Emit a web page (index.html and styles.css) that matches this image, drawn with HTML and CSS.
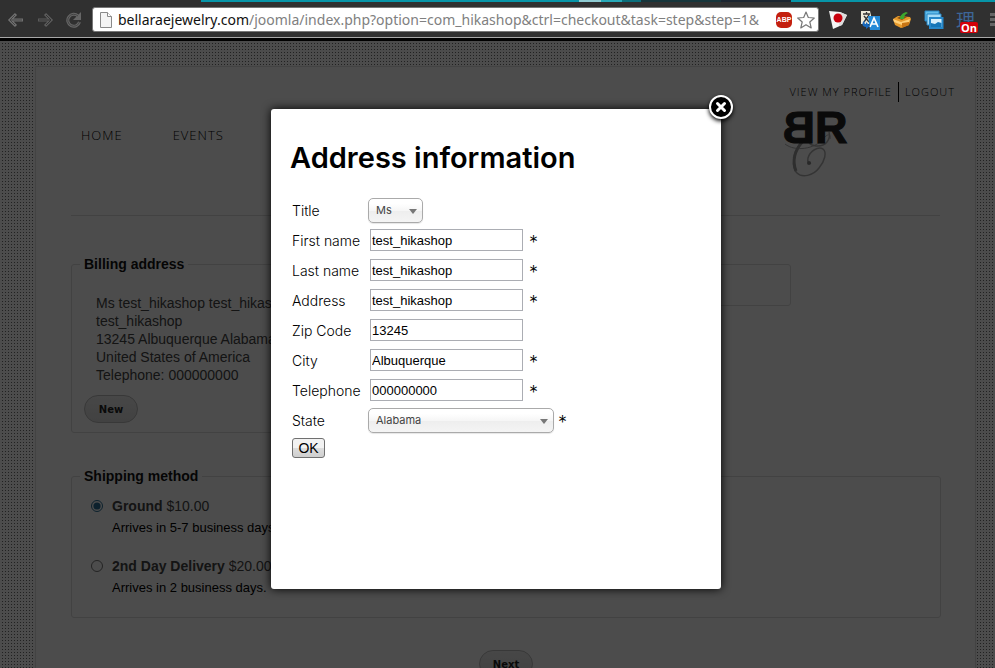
FILE: index.html
```html
<!DOCTYPE html>
<html lang="en">
<head>
  <meta charset="UTF-8">
  <meta name="viewport" content="width=device-width, initial-scale=1.0">
  <title>Checkout</title>
  <link rel="stylesheet" href="styles.css">
</head>
<body>

<div class="browser">
  <div class="tab-strip"></div>
  <div class="toolbar">
    <button class="nav-btn" aria-label="Back">
      <svg width="18" height="16" viewBox="0 0 18 16"><path d="M16 8H3M9 2L3 8l6 6" fill="none" stroke="#707070" stroke-width="3"/><path d="M15 8H4M8 3L3 8l5 5" fill="none" stroke="#444" stroke-width="1"/></svg>
    </button>
    <button class="nav-btn" aria-label="Forward">
      <svg width="18" height="16" viewBox="0 0 18 16"><path d="M2 8h13M9 2l6 6-6 6" fill="none" stroke="#5c5c5c" stroke-width="3"/><path d="M3 8h11M10 3l5 5-5 5" fill="none" stroke="#333" stroke-width="1"/></svg>
    </button>
    <button class="nav-btn" aria-label="Reload">
      <svg width="18" height="16" viewBox="0 0 18 16"><path d="M13 4a6 6 0 1 0 1.500 6" fill="none" stroke="#666" stroke-width="3"/><path d="M16 0v8H8z" fill="#666"/><path d="M13 4a6 6 0 1 0 1.500 6" fill="none" stroke="#444" stroke-width="1"/></svg>
    </button>

    <div class="address-bar">
      <svg class="page-icon" width="12" height="16" viewBox="0 0 12 16"><path d="M.5.5h7l4 4v11H.5z" fill="#f4f4f4" stroke="#8a8a8a"/><path d="M7.500.5v4h4" fill="#fff" stroke="#8a8a8a"/></svg>
      <label class="domain" for="url">bellaraejewelry.com</label>
      <input class="url" id="url" type="text" value="/joomla/index.php?option=com_hikashop&amp;ctrl=checkout&amp;task=step&amp;step=1&amp;">
      <button class="bar-btn abp" aria-label="Adblock">ABP</button>
      <button class="bar-btn" aria-label="Bookmark">
        <svg width="18" height="18" viewBox="0 0 18 18"><path d="M9 1l2.300 5.500 6 .5-4.500 4 1.400 5.900L9 13.700 3.800 16.900l1.400-5.900L.7 7l6-.5z" fill="#fff" stroke="#777" stroke-width="1.200" stroke-linejoin="round"/></svg>
      </button>
    </div>

    <div class="extensions">
      <button class="ext-btn" aria-label="Japanese">
        <svg width="20" height="20" viewBox="0 0 20 20"><path d="M1 1l11 1 7 3-5 10-9 4z" fill="#f5f5f5"/><path d="M12 2l7 3-5 10-3 1z" fill="#ddd"/><circle cx="10" cy="8" r="4.500" fill="#c8000c"/></svg>
      </button>
      <button class="ext-btn" aria-label="Translate">
        <svg width="20" height="20" viewBox="0 0 20 20"><path d="M1 1h9l3 13H1z" fill="#eee9d8"/><path d="M3 4h7M6.500 2v2M4 12l5-7M4 6l5 6" stroke="#333" stroke-width="1.300" fill="none"/><path d="M8 6h12v14H10z" fill="#2389d7"/><path d="M10 17l4-9 4 9M12 14h4" stroke="#fff" stroke-width="1.700" fill="none"/><path d="M5 10c-4 3-3 7 1 7v2l4-3-4-4v2c-2 0-2-2-1-4z" fill="#1768bd"/></svg>
      </button>
      <button class="ext-btn" aria-label="Package">
        <svg width="20" height="20" viewBox="0 0 20 20"><path d="M1 9l5-3 12 1 1 2-2 6-8 3-6-3z" fill="#e79a2c"/><path d="M1 9l8 3 9-3-1 3-7 3-8-3z" fill="#ffd079"/><path d="M10 13v5l7-3v-3z" fill="#c87514"/><path d="M5 8l4-2 6 1-5 3z" fill="#8a5210"/><path d="M8 9c0-4 3-6 6-7l2 1c-3 1-4 3-4 6z" fill="#3ca62d"/></svg>
      </button>
      <button class="ext-btn" aria-label="Pictures">
        <svg width="20" height="20" viewBox="0 0 20 20"><path d="M1 1h14v10H1z" fill="#62bce9" stroke="#2485c4"/><path d="M3 4h14v11H3z" fill="#a4dbf7" stroke="#2485c4"/><path d="M5 7h14.500v12H5z" fill="#2587c9"/><path d="M7 9h10.500v8H7z" fill="#d7f0fc"/><path d="M7 13l4 1 3-2 3.500 1v4H7z" fill="#1476b8"/></svg>
      </button>
      <button class="ext-btn kanji" aria-label="Reader">理<span class="badge">On</span></button>
      <button class="menu-btn" aria-label="Menu"><i></i><i></i><i></i></button>
    </div>
  </div>
</div>

<div class="viewport">
  <div class="site">
    <header class="header">
      <div class="account">
        <a href="#">VIEW MY PROFILE</a>
        <a href="#">LOGOUT</a>
      </div>
      <div class="header-row">
        <nav class="nav">
          <a href="#">HOME</a>
          <a href="#">EVENTS</a>
        </nav>
        <svg class="logo" width="72" height="68" viewBox="0 0 72 68">
          <g fill="none" stroke="#b0b0b0">
            <path d="M50 22c2 7-3 15-13 14-6-1-9-3-4-6M33 24c-6 3-12 8-17 18-3 7-2 17 2 21 5 5 16 3 22-5 6-7 8-16 4-19-5-3-13 2-15 9-1 4 1 6 3 5" stroke-width="1.500"/>
            <path d="M6 34c10 8 30 5 38-5 5-6 8-5 7 0" stroke-width="1"/>
            <path d="M24 31c-8 9-11 20-7 30" stroke="#999" stroke-width="3"/>
          </g>
          <circle cx="30" cy="53" r="2" fill="#888"/>
          <text class="logo-letter" transform="translate(36 33) scale(-1 1)">B</text>
          <text class="logo-letter" x="36" y="33">R</text>
        </svg>
      </div>
    </header>

    <main class="checkout">
      <div class="addresses">
        <fieldset class="box">
          <legend>Billing address</legend>
          <p class="address">
            Ms test_hikashop test_hikashop<br>
            test_hikashop<br>
            13245 Albuquerque Alabama<br>
            United States of America<br>
            Telephone: 000000000
          </p>
          <button class="pill">New</button>
        </fieldset>
        <fieldset class="box box-small" aria-label="Shipping address"></fieldset>
      </div>

      <fieldset class="box shipping">
        <legend>Shipping method</legend>
        <div class="method">
          <input type="radio" name="shipping" id="ground" checked>
          <label for="ground"><b>Ground</b> $10.00</label>
          <p>Arrives in 5-7 business days.</p>
        </div>
        <div class="method">
          <input type="radio" name="shipping" id="second-day">
          <label for="second-day"><b>2nd Day Delivery</b> $20.00</label>
          <p>Arrives in 2 business days.</p>
        </div>
      </fieldset>

      <button class="pill next">Next</button>
    </main>
  </div>

  <div class="overlay">
    <div class="modal" role="dialog" aria-labelledby="modal-title">
      <button class="close" aria-label="Close">
        <svg width="12" height="12" viewBox="0 0 12 12"><path d="M2.500 2.500l7 7M9.500 2.500l-7 7" stroke="#fff" stroke-width="3" stroke-linecap="round"/></svg>
      </button>
      <h1 id="modal-title">Address information</h1>
      <form>
        <div class="row">
          <label for="title">Title</label>
          <span class="select"><select id="title"><option>Ms</option><option>Mr</option></select></span>
        </div>
        <div class="row">
          <label for="firstname">First name</label>
          <input type="text" id="firstname" value="test_hikashop"><span class="req">*</span>
        </div>
        <div class="row">
          <label for="lastname">Last name</label>
          <input type="text" id="lastname" value="test_hikashop"><span class="req">*</span>
        </div>
        <div class="row">
          <label for="street">Address</label>
          <input type="text" id="street" value="test_hikashop"><span class="req">*</span>
        </div>
        <div class="row">
          <label for="zip">Zip Code</label>
          <input type="text" id="zip" value="13245">
        </div>
        <div class="row">
          <label for="city">City</label>
          <input type="text" id="city" value="Albuquerque"><span class="req">*</span>
        </div>
        <div class="row">
          <label for="phone">Telephone</label>
          <input type="text" id="phone" value="000000000"><span class="req">*</span>
        </div>
        <div class="row">
          <label for="state">State</label>
          <span class="select select-wide"><select id="state"><option>Alabama</option></select></span><span class="req">*</span>
        </div>
        <button class="ok" type="button">OK</button>
      </form>
    </div>
  </div>
</div>

</body>
</html>
```
FILE: styles.css
```css
* {
  box-sizing: border-box;
}

body {
  margin: 0;
  height: 100vh;
  display: flex;
  flex-direction: column;
  overflow: hidden;
  font-family: "Liberation Sans", Arial, sans-serif;
  font-size: 14px;
}

button {
  padding: 0;
  border: none;
  background: none;
  cursor: pointer;
}

/* browser bar */
.browser {
  background: #303030;
  border-bottom: 3px solid #000;
}

.tab-strip {
  height: 2px;
  margin-left: 201px;
  background: linear-gradient(90deg, #0795a8 0 378px, #8fcbd2 378px 400px, #28a9b8 400px 421px, #0b6f7c 421px 440px, #17353b 440px 520px, #1b2530 520px 590px, #0795a8 590px);
}

.toolbar {
  display: flex;
  align-items: center;
  height: 36px;
  padding-left: 7px;
  border-bottom: 1px solid #a8a8a8;
}

.nav-btn {
  width: 18px;
  height: 16px;
  margin-right: 11px;
}

.nav-btn svg,
.bar-btn svg,
.ext-btn svg {
  display: block;
}

.address-bar {
  flex: 1;
  display: flex;
  align-items: center;
  min-width: 0;
  height: 25px;
  margin-right: 9px;
  padding: 0 3px 0 7px;
  margin-left: -2px;
  background: #fff;
  border: 1px solid #777;
  border-radius: 3px;
}

.domain,
.url {
  font-family: "Noto Sans", "Open Sans", sans-serif;
  font-size: 14px;
}

.domain {
  margin-left: 6px;
  color: #111;
}

.url {
  flex: 1;
  min-width: 0;
  padding: 0;
  border: none;
  outline: none;
  background: none;
  color: #808080;
}

.abp {
  width: 16px;
  height: 16px;
  margin: 0 5px 0 3px;
  border-radius: 5px;
  background: #c4200f;
  color: #fff;
  font: bold 7px "Liberation Sans", Arial, sans-serif;
}

.extensions {
  display: flex;
  align-items: center;
  gap: 12px;
}

.ext-btn {
  width: 20px;
  height: 20px;
}

.kanji {
  position: relative;
  color: #3d6596;
  text-align: left;
  font: 19px/18px "Noto Sans CJK JP", sans-serif;
}

.badge {
  position: absolute;
  left: 4px;
  top: 12px;
  width: 18px;
  height: 11px;
  border-radius: 2px;
  background: #d40009;
  color: #fff;
  text-align: center;
  font: bold 11px/11px "Open Sans", sans-serif;
}

.menu-btn {
  width: 7px;
  overflow: hidden;
}

.menu-btn i {
  display: block;
  width: 16px;
  height: 3px;
  margin: 2px;
  background: #666;
}

/* page */
.viewport {
  flex: 1;
  position: relative;
  min-height: 0;
  overflow: hidden;
  padding: 25px 19px 0 35px;
  background-image:
    linear-gradient(90deg, #fff 2px, transparent 2px),
    linear-gradient(#fff 2px, #717171 2px);
  background-size: 3px 3px;
}

.site {
  min-height: 700px;
  background: #fff;
  border: 1px solid #e2e2e2;
}

.header {
  margin: 0 35px;
  border-bottom: 1px solid #ddd;
}

.account,
.nav {
  font-family: "Open Sans", sans-serif;
  font-weight: 300;
}

.account {
  display: flex;
  justify-content: flex-end;
  padding-top: 15px;
  margin-right: -15px;
  font-size: 11px;
  line-height: 20px;
  letter-spacing: 1px;
}

.account a {
  color: #000;
  text-decoration: none;
}

.account a + a {
  margin-left: 6px;
  padding-left: 6px;
  border-left: 1px solid #000;
}

.header-row {
  display: flex;
  justify-content: space-between;
  height: 113px;
  padding: 8px 89px 0 10px;
}

.nav {
  display: flex;
  gap: 50px;
  padding-top: 15px;
  font-size: 13px;
  line-height: 20px;
  letter-spacing: 1px;
}

.nav a {
  color: #000;
  text-decoration: none;
}

.logo {
  overflow: visible;
}

.logo-letter {
  font: bold 45px "Liberation Sans", Arial, sans-serif;
  fill: #222;
  stroke: #222;
  stroke-width: 1px;
}

.checkout {
  padding: 39px 34px 0 35px;
}

.addresses {
  display: grid;
  grid-template-columns: 1fr 1fr;
  align-items: start;
  max-width: 720px;
}

.box {
  min-width: 0;
  margin: 0;
  padding: 21px 8px 9px;
  border: 1px solid #ddd;
  border-radius: 3px;
  line-height: 18px;
  color: #444;
}

.box legend {
  padding: 0 4px;
  font-weight: bold;
  color: #111;
}

.box-small {
  height: 42px;
  margin-top: 9px;
}

.address {
  margin: 0 0 11px 16px;
}

.pill {
  display: block;
  width: 54px;
  height: 28px;
  margin-left: 4px;
  border: 1px solid #bbb;
  border-radius: 14px;
  background: linear-gradient(#eee, #dcdcdc);
  color: #222;
  font: bold 10px "DejaVu Sans", Verdana, sans-serif;
}

.shipping {
  margin-top: 34px;
  padding: 12px 12px 0 18px;
}

.shipping legend {
  margin-left: -10px;
}

.method {
  display: grid;
  grid-template-columns: 22px 1fr;
  align-items: center;
  row-gap: 4px;
  margin-bottom: 20px;
}

.method input {
  margin: 0 0 0 1px;
  width: 12px;
  height: 12px;
  accent-color: #2a6f96;
}

.method p {
  grid-column: 2;
  margin: 0;
  font-size: 13px;
  color: #000;
}

.next {
  margin: 32px auto 0;
}

/* modal */
.overlay {
  position: absolute;
  inset: 0;
  display: flex;
  justify-content: center;
  align-items: flex-start;
  padding: 68px 3px 0 0;
  background: rgba(0, 0, 0, 0.7);
}

.modal {
  position: relative;
  width: 450px;
  min-height: 480px;
  padding: 29px 20px 0 21px;
  background: #fff;
  border-radius: 3px;
  box-shadow: 0 0 10px #000;
  font-family: Inter, sans-serif;
  color: #000;
}

.modal h1 {
  margin: 0 0 17px -2px;
  font-size: 29px;
  font-weight: 600;
  line-height: 40px;
}

.close {
  position: absolute;
  top: -14px;
  right: -12px;
  display: flex;
  align-items: center;
  justify-content: center;
  width: 24px;
  height: 24px;
  border: 2px solid #fff;
  border-radius: 50%;
  background: #000;
  box-shadow: 0 2px 4px #000;
}

.row {
  display: flex;
  align-items: center;
  height: 30px;
  font-size: 14px;
  font-weight: 300;
}

.row label {
  width: 76px;
  white-space: nowrap;
}

.row input {
  width: 153px;
  height: 22px;
  margin-left: 2px;
  padding: 1px;
  border: 1px solid #abadb3;
  font: 13px "Liberation Sans", Arial, sans-serif;
}

.req {
  margin-left: 6px;
  padding-top: 6px;
  font-size: 18px;
  line-height: 20px;
}

.select {
  position: relative;
  width: 55px;
}

.select-wide {
  width: 186px;
}

.select + .req {
  margin-left: 4px;
}

.select::after {
  content: "";
  position: absolute;
  right: 6px;
  top: 11px;
  border: 4px solid transparent;
  border-top: 5px solid #777;
  border-bottom: none;
}

.select select {
  display: block;
  appearance: none;
  width: 100%;
  height: 25px;
  padding: 0 7px;
  border: 1px solid #aaa;
  border-radius: 5px;
  background: linear-gradient(#fff 20%, #f6f6f6 50%, #eee 52%, #f4f4f4 100%);
  box-shadow: 0 1px 1px rgba(0, 0, 0, 0.1);
  color: #444;
  font: 11px Inter, sans-serif;
}

.ok {
  display: block;
  width: 33px;
  height: 20px;
  margin-top: 3px;
  border: 1px solid #707070;
  border-radius: 3px;
  background: linear-gradient(#f2f2f2 0 50%, #ddd 50%, #cfcfcf);
  font: 14px/18px "Liberation Sans", Arial, sans-serif;
}
```
